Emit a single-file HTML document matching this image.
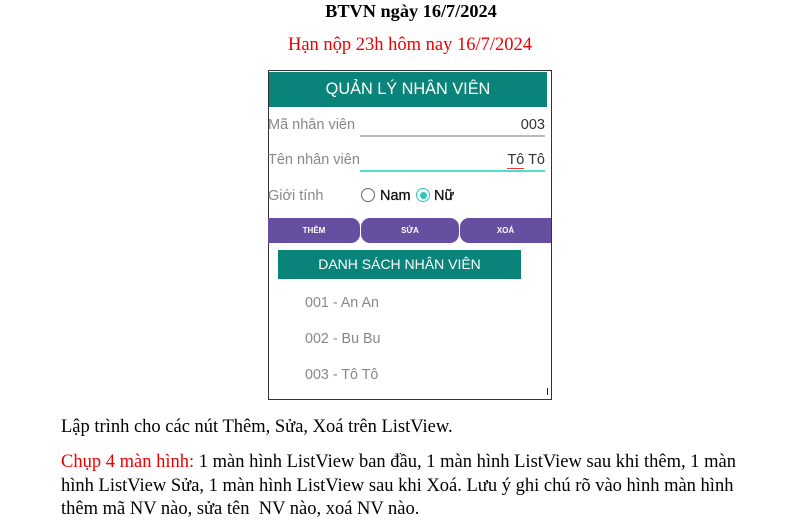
<!DOCTYPE html>
<html><head><meta charset="utf-8"><style>
body{margin:0;width:790px;height:524px;background:#fff;position:relative;overflow:hidden;font-family:"Liberation Serif",serif;}
.a{position:absolute;white-space:nowrap}
.s{font-family:"Liberation Sans",sans-serif}
.p{font-size:18.5px;color:#000}
</style></head><body>
<div class="a" style="left:0;width:822px;text-align:center;top:1px;font-size:18.3px;font-weight:bold">BTVN ngày 16/7/2024</div>
<div class="a" style="left:0;width:820px;text-align:center;top:35px;font-size:18.5px;color:#e00">Hạn nộp 23h hôm nay 16/7/2024</div>

<div class="a" style="left:268px;top:70px;width:282px;height:328px;border:1px solid #333;"></div>
<div class="a s" style="left:269px;top:72px;width:278px;height:35px;background:#0a847a;color:#fff;font-size:16.3px;text-align:center;line-height:35px">QUẢN LÝ NHÂN VIÊN</div>
<div class="a s" style="left:268px;top:117px;font-size:14.5px;color:#888">Mã nhân viên</div>
<div class="a s" style="left:505px;top:117px;font-size:14.5px;color:#333;width:40px;text-align:right">003</div>
<div class="a" style="left:360px;top:135px;width:185px;height:2px;background:#bbb"></div>
<div class="a s" style="left:268px;top:152px;font-size:14.5px;color:#888">Tên nhân viên</div>
<div class="a s" style="left:495px;top:152px;font-size:14.5px;color:#333;width:50px;text-align:right"><span style="border-bottom:1px solid #e33">Tô</span> Tô</div>
<div class="a" style="left:360px;top:170px;width:185px;height:2px;background:#4fe0cc"></div>
<div class="a s" style="left:268px;top:188px;font-size:14.5px;color:#888">Giới tính</div>
<div class="a" style="left:361px;top:188px;width:12px;height:12px;border:1.5px solid #666;border-radius:50%"></div>
<div class="a s" style="left:380px;top:188px;font-size:14.5px;color:#111;-webkit-text-stroke:0.3px #111">Nam</div>
<div class="a" style="left:416px;top:188px;width:12px;height:12px;border:1.5px solid #2cc7b5;border-radius:50%"></div>
<div class="a" style="left:420px;top:192px;width:7px;height:7px;background:#2cc7b5;border-radius:50%"></div>
<div class="a s" style="left:434px;top:188px;font-size:14.5px;color:#111;-webkit-text-stroke:0.3px #111">Nữ</div>
<div class="a s" style="left:268px;top:218px;width:92px;height:25px;background:#664ea0;border-radius:0 9px 9px 0;color:#fff;font-size:8px;font-weight:bold;text-align:center;line-height:25px">THÊM</div>
<div class="a s" style="left:361px;top:218px;width:98px;height:25px;background:#664ea0;border-radius:9px;color:#fff;font-size:8px;font-weight:bold;text-align:center;line-height:25px">SỬA</div>
<div class="a s" style="left:460px;top:218px;width:91px;height:25px;background:#664ea0;border-radius:9px 0 0 9px;color:#fff;font-size:8px;font-weight:bold;text-align:center;line-height:25px">XOÁ</div>
<div class="a s" style="left:278px;top:250px;width:243px;height:29px;background:#0a847a;color:#fff;font-size:14px;text-align:center;line-height:29px">DANH SÁCH NHÂN VIÊN</div>
<div class="a s" style="left:305px;top:295px;font-size:14.3px;color:#888">001 - An An</div>
<div class="a s" style="left:305px;top:331px;font-size:14.3px;color:#888">002 - Bu Bu</div>
<div class="a s" style="left:305px;top:367px;font-size:14.3px;color:#888">003 - Tô Tô</div>
<div class="a" style="left:547px;top:388px;width:1px;height:7px;background:#222"></div>

<div class="a p" style="left:61px;top:417px">Lập trình cho các nút Thêm, Sửa, Xoá trên ListView.</div>
<div class="a p" style="left:61px;top:452px"><span style="color:#e00">Chụp 4 màn hình:</span> 1 màn hình ListView ban đầu, 1 màn hình ListView sau khi thêm, 1 màn</div>
<div class="a p" style="left:61px;top:476px">hình ListView Sửa, 1 màn hình ListView sau khi Xoá. Lưu ý ghi chú rõ vào hình màn hình</div>
<div class="a p" style="left:61px;top:499px">thêm mã NV nào, sửa tên&nbsp; NV nào, xoá NV nào.</div>
</body></html>
